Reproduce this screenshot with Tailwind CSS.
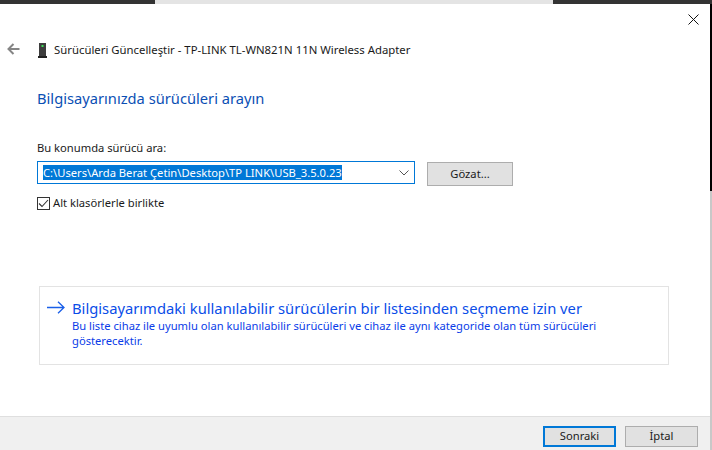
<!DOCTYPE html>
<html lang="en">
<head>
    <meta charset="UTF-8">
    <title>Sürücüleri Güncelleştir</title>
    <script src="https://cdn.jsdelivr.net/npm/@tailwindcss/browser@4"></script>
</head>
<body class="w-[712px] h-[450px] overflow-hidden bg-white font-['Noto_Sans',sans-serif] text-[11.2px] text-[#1a1a1a]">
    <!-- Window strip behind the dialog -->
    <div class="flex h-[4px]">
        <div class="w-[155px] bg-[#333333]"></div>
        <div class="w-[398px] bg-[#e4e4e4]"></div>
        <div class="flex-1 bg-[#333333]"></div>
    </div>

    <div class="flex h-[446px]">
        <div class="flex flex-col w-[710px]">
            <!-- Close -->
            <div class="flex justify-end h-[30px] pt-[10px] pr-[11px] shrink-0">
                <svg width="11" height="11" viewBox="0 0 11 11" fill="none" stroke="#111" stroke-width="1"><path d="M0.5 0.5 L10.5 10.5 M10.5 0.5 L0.5 10.5"/></svg>
            </div>

            <!-- Header -->
            <div class="flex items-center h-[32px] pl-[7px] shrink-0">
                <svg class="-mt-[2px]" width="13" height="12" viewBox="0 0 13 12" fill="none" stroke="#858585" stroke-width="2"><path d="M12.5 6 H2 M6.5 1 L1.5 6 L6.5 11"/></svg>
                <svg class="ml-[18px]" width="9" height="15" viewBox="0 0 9 15"><rect x="1" y="0" width="7" height="13" fill="#3d3d3d"/><rect x="3.5" y="2" width="2" height="2" fill="#3fe05a"/><rect x="0" y="13" width="9" height="2" fill="#222"/></svg>
                <span class="ml-[7px] text-[11.35px] whitespace-nowrap">Sürücüleri Güncelleştir - TP-LINK TL-WN821N 11N Wireless Adapter</span>
            </div>

            <div class="pl-[37px] pt-[21px] text-[#0b4fb4] text-[14.7px] leading-[22px] h-[46px] shrink-0">Bilgisayarınızda sürücüleri arayın</div>

            <!-- Search location -->
            <div class="pl-[37px] pt-[28px] shrink-0">
                <div class="leading-[16px]">Bu konumda sürücü ara:</div>
                <div class="flex items-start mt-[5px]">
                    <div class="flex items-center justify-between w-[378px] h-[23px] border border-[#0078d7] pl-[5px] pr-[5px]">
                        <span class="bg-[#0078d7] text-white leading-[15px] whitespace-nowrap">C:\Users\Arda Berat Çetin\Desktop\TP LINK\USB_3.5.0.23</span>
                        <svg width="10" height="6" viewBox="0 0 10 6" fill="none" stroke="#555" stroke-width="1"><path d="M0.5 0.5 L5 5 L9.5 0.5"/></svg>
                    </div>
                    <div class="flex items-center justify-center ml-[12px] w-[86px] h-[24px] mt-[1px] bg-[#e1e1e1] border border-[#adadad]">Gözat...</div>
                </div>
                <div class="flex items-center mt-[9px]">
                    <div class="flex items-center justify-center w-[13px] h-[13px] border border-[#333]">
                        <svg width="11" height="9" viewBox="0 0 11 9" fill="none" stroke="#333" stroke-width="1.1"><path d="M1 4.5 L4 7.5 L10 1"/></svg>
                    </div>
                    <span class="ml-[3px]">Alt klasörlerle birlikte</span>
                </div>
            </div>

            <!-- Pick from list -->
            <div class="ml-[39px] mt-[74px] w-[630px] h-[79px] border border-[#e3e3e3] shrink-0 pl-[7px] pt-[11px]">
                <div class="flex items-center h-[20px]">
                    <svg width="18" height="13" viewBox="0 0 18 13" fill="none" stroke="#1a5fe8" stroke-width="1.3"><path d="M0 6.5 H17 M11 0.7 L17 6.5 L11 12.3"/></svg>
                    <span class="ml-[7px] text-[#0a4de8] text-[14.76px] whitespace-nowrap">Bilgisayarımdaki kullanılabilir sürücülerin bir listesinden seçmeme izin ver</span>
                </div>
                <p class="ml-[25px] w-[540px] text-[#0a3ce8] text-[11.2px] leading-[15px]">Bu liste cihaz ile uyumlu olan kullanılabilir sürücüleri ve cihaz ile aynı kategoride olan tüm sürücüleri gösterecektir.</p>
            </div>

            <!-- Footer -->
            <div class="flex justify-end items-start gap-[9px] mt-auto h-[34px] bg-[#f0f0f0] border-t border-[#dfdfdf] pt-[9px] pr-[12px]">
                <div class="flex items-center justify-center w-[73px] h-[21px] bg-[#e1e1e1] border-2 border-[#0078d7]">Sonraki</div>
                <div class="flex items-center justify-center w-[73px] h-[21px] bg-[#e1e1e1] border border-[#adadad]">İptal</div>
            </div>
        </div>

        <!-- Desktop edge on the right -->
        <div class="flex flex-col w-[2px]">
            <div class="h-[187px] bg-black"></div>
            <div class="flex-1 bg-[#c8c8c8]"></div>
        </div>
    </div>
</body>
</html>
